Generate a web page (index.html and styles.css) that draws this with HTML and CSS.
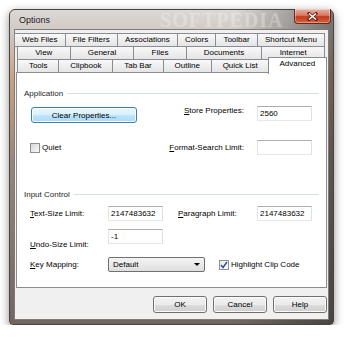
FILE: index.html
```html
<!DOCTYPE html>
<html lang="en">
<head>
    <meta charset="UTF-8">
    <title>Options</title>
    <link rel="stylesheet" href="styles.css">
</head>
<body>
    <div class="window">
        <div class="titlebar">
            <span class="title">Options</span>
            <span class="watermark">SOFTPEDIA</span>
            <div class="close">
                <svg width="11" height="9" viewBox="0 0 11 9">
                    <path d="M2 1.5 L9 7.5 M9 1.5 L2 7.5" stroke="#6b1d10" stroke-width="3" stroke-linecap="square"/>
                    <path d="M2 1.5 L9 7.5 M9 1.5 L2 7.5" stroke="#fff" stroke-width="1.6"/>
                </svg>
            </div>
        </div>
        <div class="client">
            <div class="tabs">
                <div class="tab-row row-back">
                    <div class="tab">Web Files</div>
                    <div class="tab">File Filters</div>
                    <div class="tab">Associations</div>
                    <div class="tab">Colors</div>
                    <div class="tab">Toolbar</div>
                    <div class="tab">Shortcut Menu</div>
                </div>
                <div class="tab-row">
                    <div class="tab">View</div>
                    <div class="tab">General</div>
                    <div class="tab">Files</div>
                    <div class="tab">Documents</div>
                    <div class="tab">Internet</div>
                </div>
                <div class="tab-row">
                    <div class="tab">Tools</div>
                    <div class="tab">Clipbook</div>
                    <div class="tab">Tab Bar</div>
                    <div class="tab">Outline</div>
                    <div class="tab">Quick List</div>
                    <div class="tab selected">Advanced</div>
                </div>
            </div>

            <div class="panel">
                <div class="group-title first"><span>Application</span></div>
                <div class="row row-a">
                    <button class="btn btn-default">Clear Properties...</button>
                    <span class="label-right"><u>S</u>tore Properties:</span>
                    <div class="field">2560</div>
                </div>
                <div class="row row-b">
                    <span class="check"></span>
                    <span class="check-label">Quiet</span>
                    <span class="label-right"><u>F</u>ormat-Search Limit:</span>
                    <div class="field"></div>
                </div>

                <div class="group-title second"><span>Input Control</span></div>
                <div class="row row-c">
                    <span class="label"><u>T</u>ext-Size Limit:</span>
                    <div class="field">2147483632</div>
                    <span class="label label-para"><u>P</u>aragraph Limit:</span>
                    <div class="field">2147483632</div>
                </div>
                <div class="row row-d">
                    <span class="label label-low"><u>U</u>ndo-Size Limit:</span>
                    <div class="field">-1</div>
                </div>
                <div class="row row-e">
                    <span class="label"><u>K</u>ey Mapping:</span>
                    <div class="select">
                        <span>Default</span>
                        <span class="arrow"></span>
                    </div>
                    <span class="check checked">
                        <svg width="8" height="8" viewBox="0 0 8 8">
                            <path d="M1 4 L3 6.5 L7 1" fill="none" stroke="#2a4fa8" stroke-width="1.5"/>
                        </svg>
                    </span>
                    <span class="check-label">Highlight Clip Code</span>
                </div>
            </div>

            <div class="buttons">
                <button class="btn">OK</button>
                <button class="btn">Cancel</button>
                <button class="btn">Help</button>
            </div>
        </div>
    </div>
</body>
</html>
```

FILE: styles.css
```css
* {
    box-sizing: border-box;
    margin: 0;
    padding: 0;
}

body {
    font-family: "Liberation Sans", Arial, sans-serif;
    font-size: 8px;
    color: #000;
    background: #fff;
}

.window {
    width: 325px;
    height: 316px;
    margin: 9px 0 0 9px;
    padding: 0 5px 5px;
    border: 1px solid #4a4542;
    border-radius: 6px 6px 4px 4px;
    background:
        linear-gradient(to right, rgba(0,0,0,0) 70%, rgba(40,40,40,0.55) 100%),
        linear-gradient(to bottom, #dcd8d5 0, #d0c9c4 22px, #c8a182 70px, #97877b 150px, #6f6661 100%);
    box-shadow: 0 3px 10px rgba(0,0,0,0.45);
}

.titlebar {
    display: flex;
    align-items: flex-start;
    height: 20px;
}

.title {
    font-size: 9px;
    line-height: 20px;
    padding-left: 4px;
    color: #1b1b1b;
}

.watermark {
    margin-left: 110px;
    font-family: "Liberation Serif", serif;
    font-weight: bold;
    font-size: 20px;
    line-height: 20px;
    letter-spacing: 1px;
    color: rgba(255,255,255,0.3);
}

.close {
    display: flex;
    align-items: center;
    justify-content: center;
    width: 37px;
    height: 15px;
    margin: -1px -3px 0 auto;
    border: 1px solid #6a2617;
    border-top: none;
    border-radius: 0 0 4px 4px;
    background: linear-gradient(#e9b0a2 0, #d97a63 45%, #c2381c 55%, #d4633f 100%);
    box-shadow: inset 0 0 0 1px rgba(255,255,255,0.35);
}

.client {
    height: 289px;
    padding-top: 3px;
    background: #f0f0f0;
    box-shadow: 0 0 0 1px #847a73;
}

/* tabs */
.tab-row {
    display: flex;
    height: 14px;
    margin: 0 3px 0 2px;
}

.tab-row + .tab-row {
    margin-top: -1px;
}

.row-back {
    margin-left: -1px;
}

.tab {
    flex: 1 1 auto;
    padding: 0 5px;
    border: 1px solid #898c95;
    margin-left: -1px;
    background: linear-gradient(#f8f8f8, #e5e5e5);
    text-align: center;
    line-height: 12px;
    white-space: nowrap;
}

.tab:first-child {
    margin-left: 0;
}

.tab.selected {
    position: relative;
    z-index: 1;
    margin: -2px -2px -1px -2px;
    padding-bottom: 3px;
    border-bottom: none;
    background: #fff;
    line-height: 12px;
}

/* panel */
.panel {
    position: relative;
    height: 216px;
    margin: -1px 1px 0;
    padding: 0 14px 0 7px;
    border: 1px solid #898c95;
    background: #fff;
}

.group-title {
    display: flex;
    align-items: center;
    height: 11px;
    color: #1e1e1e;
}

.group-title::after {
    content: "";
    flex: 1;
    height: 1px;
    margin-left: 4px;
    background: #d5dfe5;
}

.group-title.first {
    margin-top: 15px;
    margin-right: -7px;
}

.group-title.second {
    margin-top: 34px;
    margin-right: -7px;
}

.row {
    display: flex;
    align-items: center;
    height: 15px;
    padding-left: 6px;
}

.row-a {
    align-items: flex-start;
    height: 17px;
    margin-top: 7px;
}

.row-a .btn-default {
    margin-top: 1px;
    margin-left: 1px;
}

.row-b { margin-top: 17px; }
.row-c { margin-top: 6px; }
.row-d { margin-top: 8px; }
.row-e { margin-top: 13px; }

.label {
    width: 78px;
    white-space: nowrap;
}

.label-para {
    width: auto;
    flex: 1;
    margin-left: 15px;
}

.label-low {
    margin-top: 16px;
}

.label-right {
    flex: 1;
    text-align: right;
    margin-right: 13px;
    white-space: nowrap;
}

.field {
    width: 55px;
    height: 15px;
    padding-left: 2px;
    border: 1px solid #abadb3;
    border-color: #abadb3 #dbdfe6 #e3e9ef #e2e3ea;
    background: #fff;
    line-height: 13px;
}

.check {
    display: flex;
    align-items: center;
    justify-content: center;
    width: 10px;
    height: 10px;
    border: 1px solid #8e8f8f;
    background: linear-gradient(135deg, #d6d6d6, #fbfbfb);
}

.check.checked {
    margin-left: 14px;
    background: linear-gradient(135deg, #eaeaea, #ffffff);
}

.check-label {
    margin-left: 2px;
    white-space: nowrap;
}

.select {
    display: flex;
    align-items: center;
    width: 97px;
    height: 15px;
    padding: 0 4px;
    border: 1px solid #707070;
    border-radius: 2px;
    background: linear-gradient(#f4f4f4, #dedede);
}

.select span:first-child {
    flex: 1;
}

.arrow {
    width: 0;
    height: 0;
    border-left: 3px solid transparent;
    border-right: 3px solid transparent;
    border-top: 3px solid #000;
}

/* buttons */
.btn {
    font-family: inherit;
    font-size: 8px;
    color: #000;
    width: 54px;
    height: 17px;
    border: 1px solid #707070;
    border-radius: 3px;
    background: linear-gradient(#f2f2f2 0, #ebebeb 50%, #dddddd 50%, #cfcfcf 100%);
    box-shadow: inset 0 0 0 1px #fbfbfb;
}

.btn-default {
    width: 106px;
    height: 16px;
    border-color: #3c7fb1;
    background: linear-gradient(#eaf6fd 0, #d9f0fc 50%, #bee6fd 50%, #a7d9f5 100%);
}

.buttons {
    display: flex;
    justify-content: flex-end;
    gap: 6px;
    margin-top: 8px;
    padding-right: 1px;
}
```
